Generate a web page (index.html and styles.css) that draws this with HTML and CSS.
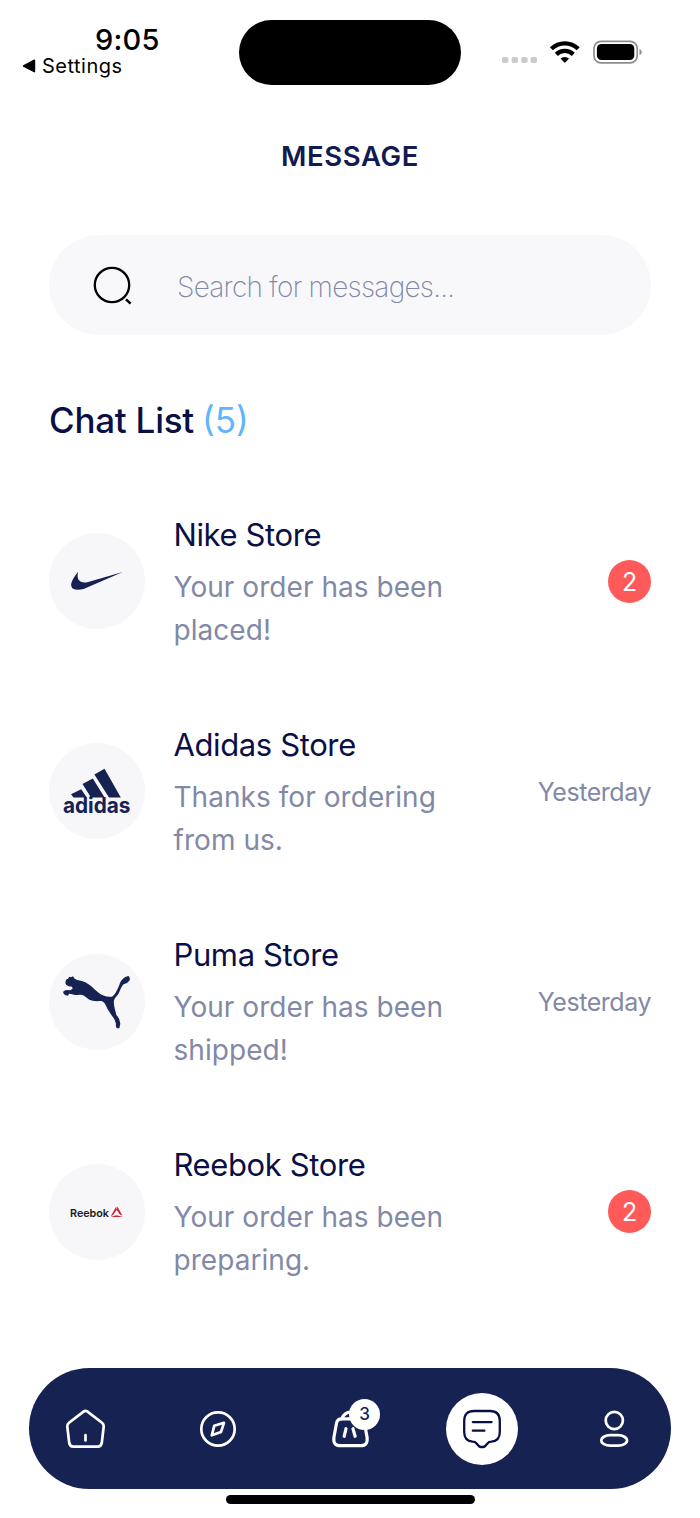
FILE: index.html
```html
<!DOCTYPE html>
<html lang="en">
<head>
<meta charset="utf-8">
<title>Message</title>
<link rel="stylesheet" href="styles.css">
</head>
<body>
<div class="phone">
  <header class="status">
    <div class="clock">
      <span class="time">9:05</span>
      <span class="back"><svg width="14" height="14" viewBox="0 0 14 14"><path d="M1.2 6.2 12 .6q1.2-.3 1.2.8v11.2q0 1.1-1.2.7L1.2 7.8q-1-.8 0-1.6z"/></svg><span class="back-label">Settings</span></span>
    </div>
    <div class="island"></div>
    <div class="signals">
      <svg width="142" height="26" viewBox="0 0 142 26">
        <g fill="#cbcbcb"><rect x="2" y="17" width="6.4" height="6" rx="1.8"/><rect x="11.6" y="17" width="6.4" height="6" rx="1.8"/><rect x="21.2" y="17" width="6.4" height="6" rx="1.8"/><rect x="30.6" y="17" width="6.4" height="6" rx="1.8"/></g>
        <g fill="none" stroke="#000" stroke-width="4.3"><path d="M51.4 8.8a19.2 19.2 0 0 1 26.8 0"/><path d="M56.3 14.4a12.2 12.2 0 0 1 17 0"/></g>
        <path d="M60.6 18.6a6.4 6.4 0 0 1 8.4 0l-3.5 3.7q-.7.7-1.4 0z"/>
        <rect x="94" y="1.3" width="43.2" height="21.6" rx="7" fill="none" stroke="#8e8e8e" stroke-width="1.7"/>
        <rect x="96.9" y="4" width="37.4" height="16" rx="4.6"/>
        <path d="M139.5 8.8q4.8 3.3 0 6.6z" fill="#8e8e8e"/>
      </svg>
    </div>
  </header>

  <h1 class="title">MESSAGE</h1>

  <label class="search">
    <svg width="42" height="42" viewBox="0 0 42 42" fill="none" stroke="#000" stroke-width="2.3"><circle cx="20" cy="20" r="17.2"/><path d="M34 34.3 38.6 38.6" stroke-width="2.5"/></svg>
    <span class="search-hint">Search for messages...</span>
  </label>

  <h2 class="heading"><span class="heading-text">Chat List</span><span class="count">(5)</span></h2>

  <main class="list">
    <article class="chat">
      <div class="avatar"><svg width="96" height="96" viewBox="0 0 96 96" fill="#162252"><path d="M29.2 38.8C25.5 43 21.2 49.7 22.3 53.2c1.3 4.3 7 4 12.3 2.7L73.8 39 39.2 48.9c-7.7 2-12.3-1.8-10-10.1z"/></svg></div>
      <div class="info"><h3 class="name">Nike Store</h3><p class="text">Your order has been<br>placed!</p></div>
      <span class="badge">2</span>
    </article>
    <article class="chat">
      <div class="avatar"><svg width="96" height="96" viewBox="0 0 96 96" fill="#162252"><path d="M22 51.3 32.2 46.2 37.8 54.6H24.5zM33.5 41 43.8 35.6 55.6 54.6H44.8L42 54.4zM45.4 31.4 55.5 25.7 71.8 54.6H60z"/><text class="adidas" x="14" y="70.4" textLength="67.5" lengthAdjust="spacingAndGlyphs">adidas</text></svg></div>
      <div class="info"><h3 class="name">Adidas Store</h3><p class="text">Thanks for ordering<br>from us.</p></div>
      <span class="date">Yesterday</span>
    </article>
    <article class="chat">
      <div class="avatar"><svg width="96" height="96" viewBox="0 0 96 96" fill="#162252"><path transform="translate(-9 -13) scale(.3333)" d="M78 116L84 113 88 107 93 109 99 106 104 113C114 119 124 118 136 124C152 132 160 143 174 154C186 164 200 169 216 167C226 161 233 144 238 132C242 118 252 107 265 105Q271 108 269 118Q263 128 251 130C243 137 240 153 233 162Q224 171 222 178C220 192 226 208 229 222Q240 232 241 248L238 262H231Q226 256 228 248L223 234C214 222 203 207 197 192Q191 180 182 180C168 181 152 181 142 172C134 164 126 159 114 162C104 163 96 158 87 158L84 164 75 162Q65 154 73 149Q80 145 91 148L98 143 96 137 86 136 79 132 76 126Z"/></svg></div>
      <div class="info"><h3 class="name">Puma Store</h3><p class="text">Your order has been<br>shipped!</p></div>
      <span class="date">Yesterday</span>
    </article>
    <article class="chat">
      <div class="avatar"><svg width="96" height="96" viewBox="0 0 96 96"><text class="reebok" x="21" y="52.8" textLength="39" lengthAdjust="spacingAndGlyphs">Reebok</text><g fill="#cb2333"><path d="m67.3 42.5-5.5 9.4 2.2-.9 3.7-5z"/><path d="m68.3 42.5 5.3 9.2-3-1.5-3-4.5z"/><path d="m61.5 53 6-1.7 6.6 1.7z"/></g></svg></div>
      <div class="info"><h3 class="name">Reebok Store</h3><p class="text">Your order has been<br>preparing.</p></div>
      <span class="badge">2</span>
    </article>
  </main>

  <nav class="tabs">
    <a class="tab"><svg width="48" height="48" viewBox="0 0 48 48"><path d="M21.5 6.6q2-1.4 4 0l14.5 11.2q1.9 1.6 1.7 3.7L39.8 37.8q-.6 3.8-4 3.8h-24.6q-3.4 0-4-3.8L5.3 21.5q-.2-2.1 1.7-3.7z"/><path d="M23.5 30.2v5.3"/></svg></a>
    <a class="tab"><svg width="48" height="48" viewBox="0 0 48 48"><circle cx="24" cy="24" r="16.7"/><path d="M30 17.8 27 26.9l-9.2 3.4 2.5-9.6z"/></svg></a>
    <a class="tab"><svg class="basket" width="48" height="48" viewBox="0 0 48 48"><path d="M15.5 13.9h18q4.2 0 5 4.4l2.6 14.2q1 8.2-6.6 8.2H14.5q-7.6 0-6.6-8.2l2.6-14.2q.8-4.4 5-4.4zM15.5 14q3.2-6.9 9-6.9T33 14"/><path d="m20 23.7-1.8 7.6M27 23.7l2.1 7.6"/></svg><span class="cart-count">3</span></a>
    <a class="tab tab-active"><svg width="48" height="48" viewBox="0 0 48 48"><path d="M16 6h16q9.8 0 9.8 9.8v11.3q0 9-8.4 9.6-2.7 0-3.8 1.7l-2.4 2.6Q26 42 25.2 42h-2.4q-.8 0-2-1l-2.4-2.6q-1.1-1.7-3.8-1.7-8.4-.6-8.4-9.6V15.8Q6.2 6 16 6z"/><path d="M14.8 17.1h18.8M14.8 25.7h11.6"/></svg></a>
    <a class="tab"><svg width="48" height="48" viewBox="0 0 48 48"><circle cx="24.3" cy="15.5" r="8.6"/><rect x="11.3" y="30.2" width="25.7" height="10.4" rx="9" ry="5.2"/></svg></a>
  </nav>
  <div class="home-bar"></div>
</div>
</body>
</html>
```
FILE: styles.css
```css
* { box-sizing: border-box; }
body { margin: 0; background: #fff; font-family: Inter, "Liberation Sans", sans-serif; color: #0a1045; }
h1, h2, h3, p { margin: 0; font-weight: 400; }
svg { display: block; flex: none; }
.phone { width: 700px; height: 1518px; display: flex; flex-direction: column; overflow: hidden; }

.status { height: 105px; display: grid; grid-template-columns: 239px 222px 1fr; align-items: start; color: #000; }
.clock { padding: 22px 0 0 22px; display: flex; flex-direction: column; }
.time { padding-left: 73px; font-size: 29px; line-height: 35px; font-weight: 550; letter-spacing: .2px; }
.back { display: flex; align-items: center; gap: 6px; height: 20px; margin-top: -1px; font-size: 20px; line-height: 20px; letter-spacing: .5px; }
.island { height: 65px; margin-top: 20.4px; border-radius: 33px; background: #000; }
.signals { padding: 40px 0 0 39px; }

.title { height: 100px; line-height: 103px; text-align: center; font-size: 27.5px; font-weight: 600; letter-spacing: .65px; color: #121a54; }
.search { height: 100px; margin: 30px 49px 0; padding: 0 43px; border-radius: 50px; background: #f8f8fa; display: flex; align-items: center; gap: 43px; }
.search svg { margin-top: 2px; }
.search-hint { font-size: 28px; font-weight: 250; color: #8088a8; line-height: 40px; padding-top: 4px; letter-spacing: -.75px; }
.heading { margin: 60px 49px 0; height: 52px; line-height: 51px; font-size: 35px; display: flex; gap: 9px; font-weight: 500; }
.heading-text { letter-spacing: -.25px; }
.count { color: #61b5fb; font-weight: 400; margin-left: -1px; }

.list { margin: 63.5px 49px 0; display: grid; gap: 69.3px; }
.chat { height: 141px; display: flex; align-items: center; }
.avatar { width: 96px; height: 96px; border-radius: 50%; background: #f7f7fa; flex: none; }
.info { flex: 1; padding-left: 28.5px; white-space: nowrap; }
.name { height: 55px; line-height: 48px; font-size: 31px; letter-spacing: -.38px; }
.text { font-size: 28px; line-height: 43px; color: #8289a6; letter-spacing: .05px; }
.badge { width: 43px; height: 43px; border-radius: 50%; background: #ff5a5a; color: #fff; font-size: 25px; line-height: 44px; text-align: center; }
.date { font-size: 25px; color: #8289a6; white-space: nowrap; letter-spacing: -.45px; padding-top: 1px; }
.adidas { font: 700 22px Inter, sans-serif; }
.reebok { font: 600 11px Inter, sans-serif; fill: #17171c; }

.tabs { margin: 85.5px 29px 0; height: 121px; flex: none; padding: 1px 21px 0; border-radius: 61px; background: #162252; display: flex; align-items: center; justify-content: space-between; }
.tab { width: 72px; height: 72px; border-radius: 50%; display: grid; place-items: center; position: relative; }
.tab svg { fill: none; stroke: #fff; stroke-width: 2.7; stroke-linecap: round; stroke-linejoin: round; }
.tab .basket { stroke-width: 3.2; }
.tab-active { background: #fff; }
.tab-active svg { stroke: #0a1045; stroke-width: 2.3; }
.cart-count { position: absolute; left: 35px; top: 6px; width: 31px; height: 31px; border-radius: 50%; background: #fff; color: #162252; font-size: 17px; line-height: 31px; font-weight: 500; text-align: center; }
.home-bar { width: 249px; height: 9px; margin: 6px auto 0; border-radius: 5px; background: #000; flex: none; }
```
